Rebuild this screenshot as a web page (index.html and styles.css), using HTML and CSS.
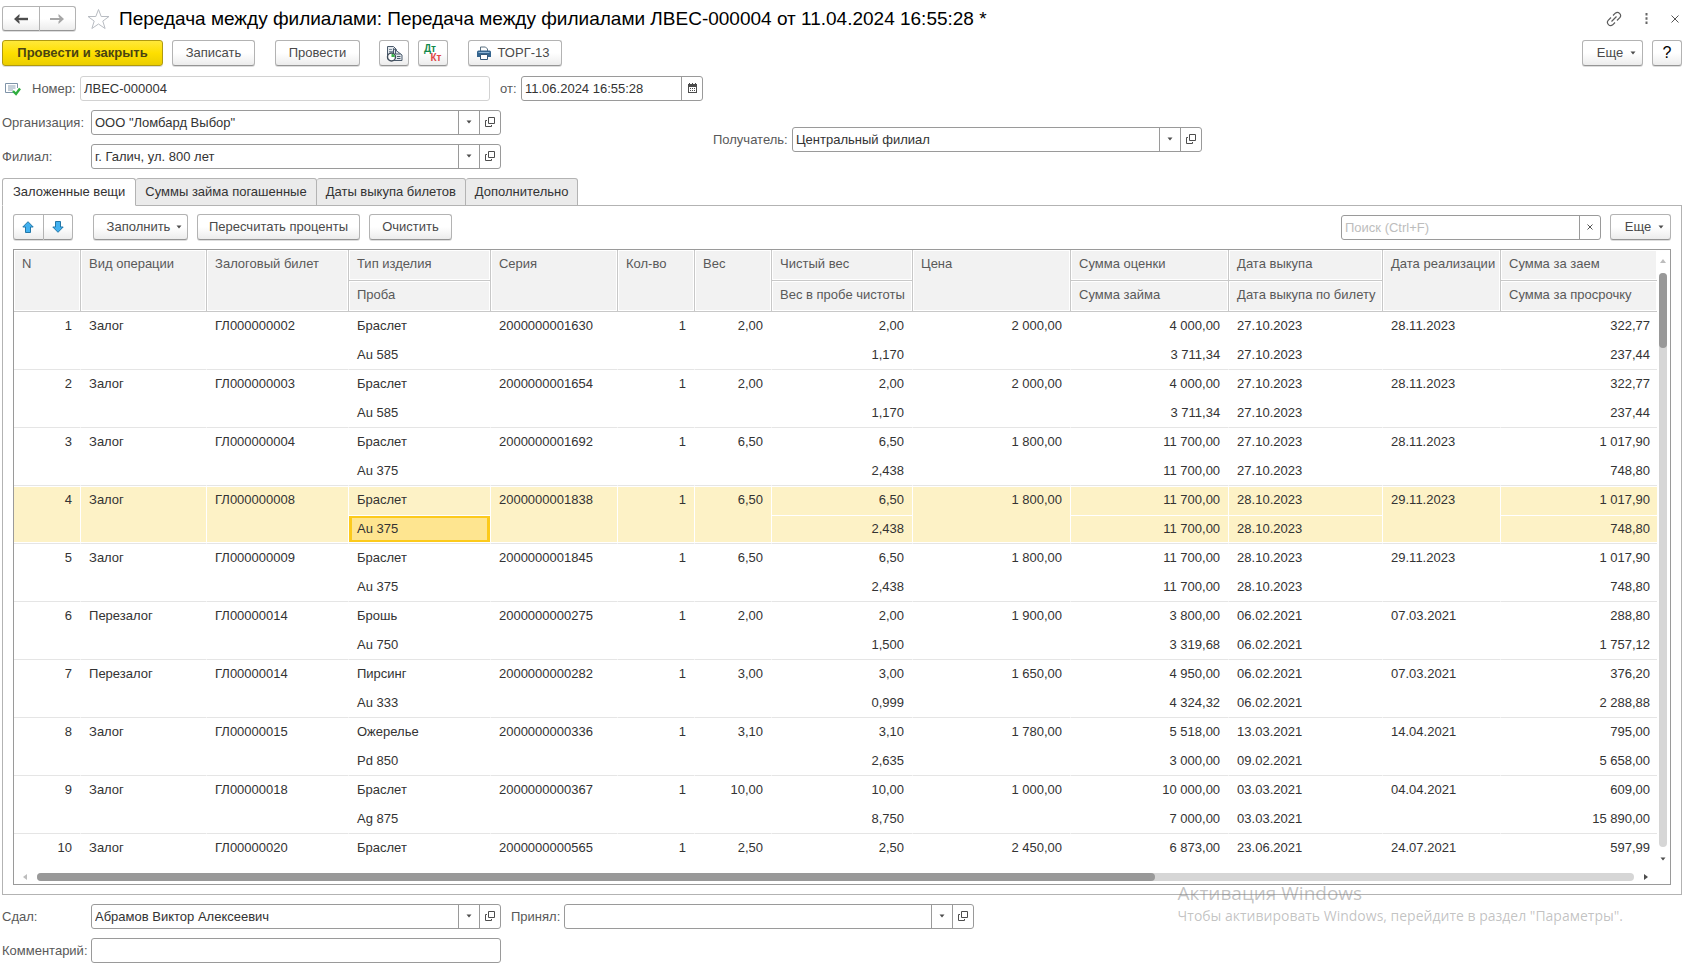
FILE: index.html
```html
<!DOCTYPE html>
<html lang="ru">
<head>
<meta charset="utf-8">
<title>Передача между филиалами</title>
<link rel="stylesheet" href="styles.css">
</head>
<body>
<svg class="sprite" aria-hidden="true">
  <symbol id="open" viewBox="0 0 10 10"><path d="M3.500.5h6v6h-6zM2 3.500H.5v6h6V8" fill="none" stroke="#4d4d4d"/></symbol>
  <symbol id="caret" viewBox="0 0 6 4"><path d="M.5.5h5L3 3.500z" fill="#4d4d4d"/></symbol>
</svg>
<main class="page">
  <header class="titlebar">
    <div class="btn-pair nav">
      <button type="button" class="btn" aria-label="Назад"><svg width="14" height="10" viewBox="0 0 14 10"><path d="M14 5H3" stroke="#4d4d4d" stroke-width="2.400"/><path d="M5.500 0v2.500L3.500 5l2 2.500V10L0 5z" fill="#4d4d4d"/></svg></button>
      <button type="button" class="btn" aria-label="Вперед"><svg width="14" height="10" viewBox="0 0 14 10"><path d="M0 5h11" stroke="#a6a6a6" stroke-width="2"/><path d="M8.500 0v2.500l2 2.500-2 2.500V10L14 5z" fill="#a6a6a6"/></svg></button>
    </div>
    <button type="button" class="plain star" aria-label="Избранное"><svg width="23" height="22" viewBox="0 0 23 22"><path d="M11.500 1.500l2.700 7H22l-6.200 4.600 2.300 7.400-6.600-4.500-6.600 4.500 2.300-7.400L1 8.500h7.800z" fill="none" stroke="#b8bcc2"/></svg></button>
    <h1 class="title">Передача между филиалами: Передача между филиалами ЛВЕС-000004 от 11.04.2024 16:55:28 *</h1>
    <div class="window-tools">
      <button type="button" class="plain" aria-label="Ссылка"><svg width="16" height="16" viewBox="0 0 16 16"><path d="M7 4.500l2.300-2.300a3.200 3.200 0 0 1 4.500 4.500L11 9.500M9 11.500l-2.300 2.300a3.200 3.200 0 0 1-4.500-4.500L5 6.500M5.500 10.500l5-5" fill="none" stroke="#5c5c5c" stroke-width="1.200"/></svg></button>
      <button type="button" class="plain" aria-label="Меню"><svg width="3" height="11" viewBox="0 0 3 11"><path d="M.5 0h2v2.500h-2zM.5 4.200h2v2.500h-2zM.5 8.500h2V11h-2z" fill="#666"/></svg></button>
      <button type="button" class="plain" aria-label="Закрыть"><svg width="8" height="8" viewBox="0 0 8 8"><path d="M.5.5l7 7M7.500.5l-7 7" stroke="#555"/></svg></button>
    </div>
  </header>

  <div class="toolbar">
    <button type="button" class="btn primary">Провести и закрыть</button>
    <button type="button" class="btn save">Записать</button>
    <button type="button" class="btn post">Провести</button>
    <button type="button" class="btn icon" aria-label="Создать на основании"><svg width="17" height="17" viewBox="0 0 17 17"><path d="M1.500 14V1.500h6l3 3V14z" fill="#e3e8ec" stroke="#4a5a6c"/><path d="M3 4.500h3M3 6.500h5" stroke="#8090a0"/><path d="M7.500 15.500V3.500l8.500 6.500v5.500z" fill="#e3e8ec" stroke="#4a5a6c"/><path d="M9.500 3.500v5.500h5M11 11.500h3.500M11 13.500h3.500" fill="none" stroke="#4a5a6c"/><circle cx="5.500" cy="12" r="4" fill="#fff" stroke="#3f4c5a" stroke-width="1.400"/><path d="M5.500 12V8.700A3.300 3.300 0 0 1 8.800 12z" fill="#3cb54a"/></svg></button>
    <button type="button" class="btn icon dtkt" aria-label="Дт Кт"><span class="dt">Дт</span><span class="kt">Кт</span></button>
    <button type="button" class="btn print"><svg width="14" height="14" viewBox="0 0 14 14"><path d="M3.500 5V1h5l2 2v2" fill="#fff" stroke="#5b7080"/><path d="M0 6q0-1.500 1.500-1.500h11Q14 4.500 14 6v5H0z" fill="#34658f"/><path d="M1.500 6.500h11" stroke="#8db4d6"/><path d="M3.500 8.500h7v5h-7z" fill="#fff" stroke="#34587a"/></svg>ТОРГ-13</button>
    <button type="button" class="btn more">Еще<svg class="caret"><use href="#caret"/></svg></button>
    <button type="button" class="btn icon help">?</button>
  </div>

  <div class="row number-row">
    <svg class="status" width="16" height="14" viewBox="0 0 16 14"><path d="M9 10.500H.5v-9h12V6" fill="#fff" stroke="#7e93a8"/><path d="M3 4h7.500M3 6h7.500M3 8h5" stroke="#8ca0b3"/><path d="M8 9l3 3 4-5.500" fill="none" stroke="#2fae3f" stroke-width="2.400"/></svg>
    <label class="lbl" for="num">Номер:</label>
    <div class="field soft"><input id="num" value="ЛВЕС-000004"></div>
    <label class="lbl from" for="date">от:</label>
    <div class="field date"><input id="date" value="11.06.2024 16:55:28"><button type="button" aria-label="Календарь"><svg width="9" height="10" viewBox="0 0 9 10"><path d="M0 1h1V0h1v1h2V0h1v1h2V0h1v1h1v9H0z" fill="#4d4d4d"/><path d="M1 4h7v5H1z" fill="#fff"/><path d="M2 5.500h5M2 7.500h5" stroke="#4d4d4d" stroke-dasharray="1 1"/></svg></button></div>
  </div>

  <div class="parties">
    <div class="stack">
      <div class="row"><label class="lbl wide" for="org">Организация:</label>
        <div class="field"><input id="org" value="ООО &quot;Ломбард Выбор&quot;"><button type="button" aria-label="Выбрать"><svg class="caret"><use href="#caret"/></svg></button><button type="button" aria-label="Открыть"><svg class="open"><use href="#open"/></svg></button></div></div>
      <div class="row"><label class="lbl wide" for="branch">Филиал:</label>
        <div class="field"><input id="branch" value="г. Галич, ул. 800 лет"><button type="button" aria-label="Выбрать"><svg class="caret"><use href="#caret"/></svg></button><button type="button" aria-label="Открыть"><svg class="open"><use href="#open"/></svg></button></div></div>
    </div>
    <div class="row"><label class="lbl recipient" for="rcp">Получатель:</label>
      <div class="field"><input id="rcp" value="Центральный филиал"><button type="button" aria-label="Выбрать"><svg class="caret"><use href="#caret"/></svg></button><button type="button" aria-label="Открыть"><svg class="open"><use href="#open"/></svg></button></div></div>
  </div>

  <div class="tabs" role="tablist">
    <button type="button" class="tab active" role="tab" aria-selected="true">Заложенные вещи</button>
    <button type="button" class="tab" role="tab">Суммы займа погашенные</button>
    <button type="button" class="tab" role="tab">Даты выкупа билетов</button>
    <button type="button" class="tab" role="tab">Дополнительно</button>
  </div>

  <section class="panel">
    <div class="panel-bar">
      <div class="btn-pair move">
        <button type="button" class="btn" aria-label="Вверх"><svg width="12" height="12" viewBox="0 0 12 12"><path d="M6 .7l5.200 5.300H8.500v5.500h-5V6H.8z" fill="#41b1f0" stroke="#2277a8"/></svg></button>
        <button type="button" class="btn" aria-label="Вниз"><svg width="12" height="12" viewBox="0 0 12 12"><path d="M6 11.300L.8 6h2.700V.5h5V6h2.700z" fill="#41b1f0" stroke="#2277a8"/></svg></button>
      </div>
      <button type="button" class="btn fill">Заполнить<svg class="caret"><use href="#caret"/></svg></button>
      <button type="button" class="btn recalc">Пересчитать проценты</button>
      <button type="button" class="btn clear">Очистить</button>
      <div class="field search"><input aria-label="Поиск" placeholder="Поиск (Ctrl+F)"><button type="button" aria-label="Очистить поиск"><svg width="6" height="6" viewBox="0 0 6 6"><path d="M.5.5l5 5M5.500.5l-5 5" stroke="#555"/></svg></button></div>
      <button type="button" class="btn more">Еще<svg class="caret"><use href="#caret"/></svg></button>
    </div>

    <div class="grid">
      <div class="view">
        <table>
          <colgroup><col class="w67"><col class="w126"><col class="w142"><col class="w142"><col class="w127"><col class="w77"><col class="w77"><col class="w141"><col class="w158"><col class="w158"><col class="w154"><col class="w118"><col></colgroup>
          <thead>
            <tr><th rowspan="2">N</th><th rowspan="2">Вид операции</th><th rowspan="2">Залоговый билет</th><th>Тип изделия</th><th rowspan="2">Серия</th><th rowspan="2">Кол-во</th><th rowspan="2">Вес</th><th>Чистый вес</th><th rowspan="2">Цена</th><th>Сумма оценки</th><th>Дата выкупа</th><th rowspan="2">Дата реализации</th><th>Сумма за заем</th></tr>
            <tr><th>Проба</th><th>Вес в пробе чистоты</th><th>Сумма займа</th><th>Дата выкупа по билету</th><th>Сумма за просрочку</th></tr>
          </thead>
          <tbody>
            <tr class="a"><td rowspan="2">1</td><td rowspan="2">Залог</td><td rowspan="2">ГЛ000000002</td><td>Браслет</td><td rowspan="2">2000000001630</td><td rowspan="2">1</td><td rowspan="2">2,00</td><td>2,00</td><td rowspan="2">2 000,00</td><td>4 000,00</td><td>27.10.2023</td><td rowspan="2">28.11.2023</td><td>322,77</td></tr>
            <tr class="b"><td>Au 585</td><td>1,170</td><td>3 711,34</td><td>27.10.2023</td><td>237,44</td></tr>
            <tr class="a"><td rowspan="2">2</td><td rowspan="2">Залог</td><td rowspan="2">ГЛ000000003</td><td>Браслет</td><td rowspan="2">2000000001654</td><td rowspan="2">1</td><td rowspan="2">2,00</td><td>2,00</td><td rowspan="2">2 000,00</td><td>4 000,00</td><td>27.10.2023</td><td rowspan="2">28.11.2023</td><td>322,77</td></tr>
            <tr class="b"><td>Au 585</td><td>1,170</td><td>3 711,34</td><td>27.10.2023</td><td>237,44</td></tr>
            <tr class="a"><td rowspan="2">3</td><td rowspan="2">Залог</td><td rowspan="2">ГЛ000000004</td><td>Браслет</td><td rowspan="2">2000000001692</td><td rowspan="2">1</td><td rowspan="2">6,50</td><td>6,50</td><td rowspan="2">1 800,00</td><td>11 700,00</td><td>27.10.2023</td><td rowspan="2">28.11.2023</td><td>1 017,90</td></tr>
            <tr class="b"><td>Au 375</td><td>2,438</td><td>11 700,00</td><td>27.10.2023</td><td>748,80</td></tr>
            <tr class="a sel"><td rowspan="2">4</td><td rowspan="2">Залог</td><td rowspan="2">ГЛ000000008</td><td>Браслет</td><td rowspan="2">2000000001838</td><td rowspan="2">1</td><td rowspan="2">6,50</td><td>6,50</td><td rowspan="2">1 800,00</td><td>11 700,00</td><td>28.10.2023</td><td rowspan="2">29.11.2023</td><td>1 017,90</td></tr>
            <tr class="b sel"><td class="cur">Au 375</td><td>2,438</td><td>11 700,00</td><td>28.10.2023</td><td>748,80</td></tr>
            <tr class="a"><td rowspan="2">5</td><td rowspan="2">Залог</td><td rowspan="2">ГЛ000000009</td><td>Браслет</td><td rowspan="2">2000000001845</td><td rowspan="2">1</td><td rowspan="2">6,50</td><td>6,50</td><td rowspan="2">1 800,00</td><td>11 700,00</td><td>28.10.2023</td><td rowspan="2">29.11.2023</td><td>1 017,90</td></tr>
            <tr class="b"><td>Au 375</td><td>2,438</td><td>11 700,00</td><td>28.10.2023</td><td>748,80</td></tr>
            <tr class="a"><td rowspan="2">6</td><td rowspan="2">Перезалог</td><td rowspan="2">ГЛ00000014</td><td>Брошь</td><td rowspan="2">2000000000275</td><td rowspan="2">1</td><td rowspan="2">2,00</td><td>2,00</td><td rowspan="2">1 900,00</td><td>3 800,00</td><td>06.02.2021</td><td rowspan="2">07.03.2021</td><td>288,80</td></tr>
            <tr class="b"><td>Au 750</td><td>1,500</td><td>3 319,68</td><td>06.02.2021</td><td>1 757,12</td></tr>
            <tr class="a"><td rowspan="2">7</td><td rowspan="2">Перезалог</td><td rowspan="2">ГЛ00000014</td><td>Пирсинг</td><td rowspan="2">2000000000282</td><td rowspan="2">1</td><td rowspan="2">3,00</td><td>3,00</td><td rowspan="2">1 650,00</td><td>4 950,00</td><td>06.02.2021</td><td rowspan="2">07.03.2021</td><td>376,20</td></tr>
            <tr class="b"><td>Au 333</td><td>0,999</td><td>4 324,32</td><td>06.02.2021</td><td>2 288,88</td></tr>
            <tr class="a"><td rowspan="2">8</td><td rowspan="2">Залог</td><td rowspan="2">ГЛ00000015</td><td>Ожерелье</td><td rowspan="2">2000000000336</td><td rowspan="2">1</td><td rowspan="2">3,10</td><td>3,10</td><td rowspan="2">1 780,00</td><td>5 518,00</td><td>13.03.2021</td><td rowspan="2">14.04.2021</td><td>795,00</td></tr>
            <tr class="b"><td>Pd 850</td><td>2,635</td><td>3 000,00</td><td>09.02.2021</td><td>5 658,00</td></tr>
            <tr class="a"><td rowspan="2">9</td><td rowspan="2">Залог</td><td rowspan="2">ГЛ00000018</td><td>Браслет</td><td rowspan="2">2000000000367</td><td rowspan="2">1</td><td rowspan="2">10,00</td><td>10,00</td><td rowspan="2">1 000,00</td><td>10 000,00</td><td>03.03.2021</td><td rowspan="2">04.04.2021</td><td>609,00</td></tr>
            <tr class="b"><td>Ag 875</td><td>8,750</td><td>7 000,00</td><td>03.03.2021</td><td>15 890,00</td></tr>
            <tr class="a last"><td>10</td><td>Залог</td><td>ГЛ00000020</td><td>Браслет</td><td>2000000000565</td><td>1</td><td>2,50</td><td>2,50</td><td>2 450,00</td><td>6 873,00</td><td>23.06.2021</td><td>24.07.2021</td><td>597,99</td></tr>
          </tbody>
        </table>
      </div>
      <div class="vbar">
        <svg width="6" height="4" viewBox="0 0 6 4"><path d="M0 4h6L3 0z" fill="#bdbdbd"/></svg>
        <div class="track"><div class="thumb"></div></div>
        <svg class="caret"><use href="#caret"/></svg>
      </div>
      <div class="hbar">
        <svg width="4" height="6" viewBox="0 0 4 6"><path d="M4 0v6L0 3z" fill="#bdbdbd"/></svg>
        <div class="track"><div class="thumb"></div></div>
        <svg width="4" height="6" viewBox="0 0 4 6"><path d="M0 0v6l4-3z" fill="#4d4d4d"/></svg>
      </div>
    </div>
  </section>

  <footer class="stack">
    <div class="row"><label class="lbl wide" for="gave">Сдал:</label>
      <div class="field"><input id="gave" value="Абрамов Виктор Алексеевич"><button type="button" aria-label="Выбрать"><svg class="caret"><use href="#caret"/></svg></button><button type="button" aria-label="Открыть"><svg class="open"><use href="#open"/></svg></button></div>
      <label class="lbl took" for="took">Принял:</label>
      <div class="field"><input id="took"><button type="button" aria-label="Выбрать"><svg class="caret"><use href="#caret"/></svg></button><button type="button" aria-label="Открыть"><svg class="open"><use href="#open"/></svg></button></div></div>
    <div class="row"><label class="lbl wide" for="note">Комментарий:</label><div class="field"><input id="note"></div></div>
  </footer>

  <div class="watermark">
    <div class="wm-title">Активация Windows</div>
    <div class="wm-text">Чтобы активировать Windows, перейдите в раздел "Параметры".</div>
  </div>
</main>
</body>
</html>
```
FILE: styles.css
```css
* { box-sizing: border-box; }

body {
  margin: 0;
  background: #fff;
  color: #333;
  font: 13px/16px "Liberation Sans", Arial, sans-serif;
}

button, input { font: inherit; color: inherit; }

.sprite { position: absolute; width: 0; height: 0; }
.caret { width: 6px; height: 4px; flex: none; }
.open { width: 10px; height: 10px; }

.page {
  position: relative;
  display: flex;
  flex-direction: column;
  height: 100vh;
  min-height: 600px;
  padding: 6px 9px 12px 2px;
}

/* Buttons */
.btn {
  display: flex;
  align-items: center;
  justify-content: center;
  height: 26px;
  padding: 0;
  border: 1px solid #b3b3b3;
  border-bottom-color: #959595;
  border-radius: 3px;
  background: linear-gradient(#fff 50%, #ececec);
  box-shadow: 0 1px 0 #ddd;
  color: #4a4a4a;
}
.primary {
  width: 161px;
  background: linear-gradient(#ffe83a, #fedf00 50%, #ebce00);
  border-color: #b09a10;
  font-weight: bold;
  color: #4a4312;
}
.plain { display: flex; padding: 0; border: 0; background: none; }
.btn-pair { display: flex; }
.btn-pair .btn { flex: 1; }
.btn-pair .btn:first-child { border-radius: 3px 0 0 3px; }
.btn-pair .btn:last-child { border-radius: 0 3px 3px 0; border-left: 0; }
.nav { width: 74px; }
.move { width: 60px; margin-right: 11px; }

/* Title */
.titlebar { display: flex; align-items: center; height: 25px; }
.nav .btn { height: 25px; }
.star { margin: 0 9px 0 11px; }
.title {
  margin: 0;
  font-size: 19px;
  line-height: 24px;
  font-weight: normal;
  color: #000;
  white-space: nowrap;
}
.window-tools { display: flex; align-items: center; gap: 23px; margin-left: auto; padding-right: 3px; }

/* Main command bar */
.toolbar { display: flex; gap: 9px; margin: 9px 0 10px; }
.save { width: 83px; }
.post { width: 85px; margin: 0 10px 0 11px; }
.icon { width: 30px; }
.dtkt { flex-direction: column; font-size: 10px; line-height: 9px; font-weight: bold; }
.dt { color: #148a4c; margin-right: 6px; }
.kt { color: #e04848; margin-left: 6px; }
.print { width: 94px; gap: 7px; margin-left: 11px; padding-right: 4px; }
.more { width: 61px; gap: 7px; padding-left: 8px; margin-left: auto; }
.help { font-size: 16px; color: #000; }

/* Fields */
.row { display: flex; align-items: center; }
.stack { display: flex; flex-direction: column; gap: 9px; }
.lbl { color: #595959; white-space: nowrap; }
.wide { width: 89px; }
.recipient { width: 79px; }
.took { width: 63px; padding-left: 10px; }
.from { width: 31px; padding-left: 10px; }
.field {
  display: flex;
  width: 410px;
  height: 25px;
  border: 1px solid #9a9a9a;
  border-radius: 3px;
  background: #fff;
}
.field input {
  flex: 1;
  min-width: 0;
  padding: 0 3px;
  border: 0;
  outline: 0;
  background: none;
}
.field button {
  display: flex;
  align-items: center;
  justify-content: center;
  width: 21px;
  padding: 0 0 2px;
  border: 0;
  border-left: 1px solid #9a9a9a;
  background: none;
}
.soft { border-color: #d2d2d2; }
.date { width: 182px; }
.number-row { margin-bottom: 9px; }
.status { margin: 0 11px 0 3px; }
.number-row .lbl:not(.from) { width: 48px; }
.parties { display: grid; grid-template-columns: 711fr 969fr; align-items: center; }

/* Tabs */
.tabs { display: flex; margin-top: 9px; }
.tab {
  height: 28px;
  margin-bottom: -1px;
  padding: 0 9px;
  border: 1px solid #b3b3b3;
  border-left: 0;
  border-radius: 3px 3px 0 0;
  background: #ebebeb;
  white-space: nowrap;
}
.tab.active {
  position: relative;
  padding: 0 10px;
  border-left: 1px solid #b3b3b3;
  border-bottom-color: #fff;
  background: #fff;
}

.panel {
  flex: 1;
  display: flex;
  flex-direction: column;
  min-height: 0;
  margin-bottom: 9px;
  padding: 8px 10px 9px;
  border: 1px solid #b3b3b3;
}
.panel-bar { display: flex; gap: 9px; margin-bottom: 9px; }
.fill { width: 95px; gap: 6px; padding-left: 8px; }
.recalc { width: 163px; }
.clear { width: 83px; }
.search { width: 260px; margin: 1px 0 0 auto; }
.search ::placeholder { color: #bdbdbd; opacity: 1; }
.panel-bar .more { margin-left: 0; }

/* Item grid */
.grid {
  flex: 1;
  display: grid;
  grid-template: minmax(0, 1fr) 21px / minmax(0, 1fr) 13px;
  min-height: 0;
  border: 1px solid #9a9a9a;
}
.view { overflow: hidden; }
table { width: 100%; table-layout: fixed; border-collapse: separate; border-spacing: 0; }
.w67 { width: 4.08%; }
.w77 { width: 4.69%; }
.w118 { width: 7.18%; }
.w126 { width: 7.67%; }
.w127 { width: 7.73%; }
.w141 { width: 8.58%; }
.w142 { width: 8.64%; }
.w154 { width: 9.37%; }
.w158 { width: 9.62%; }
th, td { padding: 0 8px; vertical-align: top; white-space: nowrap; text-align: left; }
th {
  height: 31px;
  border-right: 1px solid #c8c8c8;
  border-bottom: 1px solid #c8c8c8;
  background: #f2f2f2;
  box-shadow: inset 0 0 0 1px #fff;
  line-height: 28px;
  font-weight: normal;
  color: #595959;
}
td { height: 29px; line-height: 28px; border-right: 1px solid transparent; }
.a td[rowspan], .b td { border-bottom: 1px solid #e5e5e5; }
th:last-child, td:last-child { border-right: 0; }
td:last-child { padding-right: 7px; }
.a td:nth-child(1), .a td:nth-child(6), .a td:nth-child(7), .a td:nth-child(8),
.a td:nth-child(9), .a td:nth-child(10), .a td:nth-child(13),
.b td:nth-child(2), .b td:nth-child(3), .b td:nth-child(5) { text-align: right; }
.sel td { background: #fdf2c6; background-clip: padding-box; box-shadow: inset 0 1px #fff; }
.a.sel td[rowspan], .b.sel td { box-shadow: inset 0 1px #fff, inset 0 -1px #fff; }
.b.sel .cur {
  background: #fee590;
  background-clip: padding-box;
  box-shadow: inset 0 1px #fff, inset 0 -1px #fff, inset 0 0 0 3px #fcca1c;
}

.vbar, .hbar { display: flex; align-items: center; }
.vbar { flex-direction: column; padding: 9px 1px 2px 0; gap: 10px; }
.hbar { padding: 6px 9px 0; gap: 10px; }
.track { flex: 1; border-radius: 4px; background: #d6d6d6; }
.vbar .track { width: 8px; }
.hbar .track { height: 8px; }
.thumb { border-radius: 4px; background: #999; }
.vbar .thumb { width: 8px; height: 13%; }
.hbar .thumb { height: 8px; width: 70%; }

/* System notice over the lower right corner */
.watermark {
  position: absolute;
  right: 68px;
  bottom: 49px;
  color: rgba(120, 120, 120, .45);
  font-family: "Open Sans", "Noto Sans", sans-serif;
  font-size: 14px;
  line-height: 20px;
  pointer-events: none;
}
.wm-title { font-size: 19px; line-height: 26px; }
```
